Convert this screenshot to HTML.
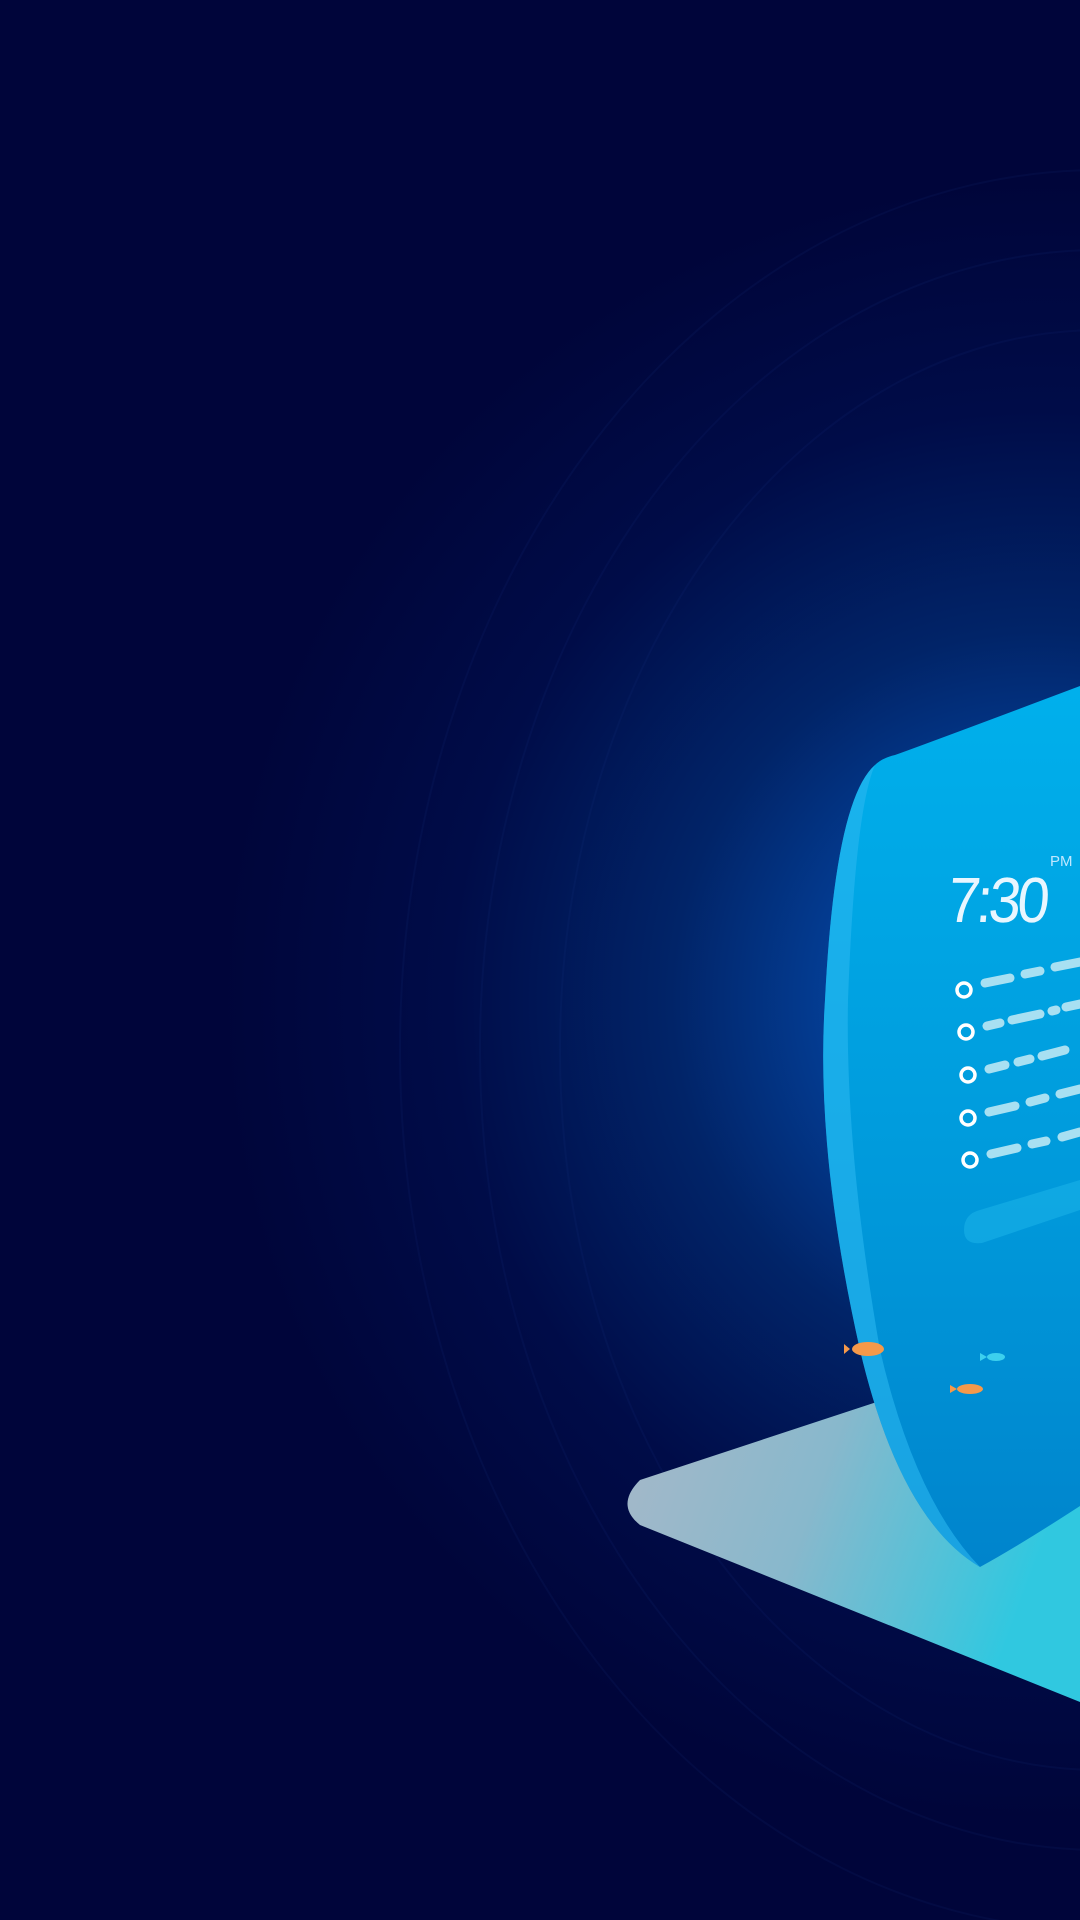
<!DOCTYPE html>
<html><head><meta charset="utf-8"><style>
html,body{margin:0;padding:0;width:1080px;height:1920px;overflow:hidden;background:#00053a;}
svg{display:block}
</style></head><body>
<svg width="1080" height="1920" viewBox="0 0 1080 1920" xmlns="http://www.w3.org/2000/svg">
<defs>
<radialGradient id="bg" cx="1040" cy="1000" r="820" gradientUnits="userSpaceOnUse">
<stop offset="0" stop-color="#0a5fc4"/>
<stop offset="0.22" stop-color="#04429c"/>
<stop offset="0.45" stop-color="#012468"/>
<stop offset="0.72" stop-color="#000c48"/>
<stop offset="1" stop-color="#00053a"/>
</radialGradient>
<linearGradient id="scr" x1="0" y1="0" x2="0" y2="1">
<stop offset="0" stop-color="#00b0ec"/>
<stop offset="0.6" stop-color="#0098da"/>
<stop offset="1" stop-color="#0084cc"/>
</linearGradient>
<linearGradient id="base" x1="0" y1="0" x2="1" y2="0.3">
<stop offset="0" stop-color="#a9b8c8"/>
<stop offset="0.5" stop-color="#88b8cc"/>
<stop offset="1" stop-color="#30c8e0"/>
</linearGradient>
</defs>
<rect width="1080" height="1920" fill="url(#bg)"/>
<g fill="none" stroke="#1a3a8a" stroke-opacity="0.12" stroke-width="2">
<ellipse cx="1100" cy="1050" rx="700" ry="880"/>
<ellipse cx="1100" cy="1050" rx="620" ry="800"/>
<ellipse cx="1100" cy="1050" rx="540" ry="720"/>
</g>
<!-- base -->
<path d="M640 1480 L1080 1335 L1080 1702 L640 1525 Q615 1505 640 1480 Z" fill="url(#base)"/>
<!-- screen -->
<path d="M895 755 Q950 735 1080 686 L1080 1506 Q1020 1545 980 1567 Q900 1520 860 1350 Q815 1150 825 1000 Q835 800 875 765 Q882 758 895 755 Z" fill="url(#scr)"/>
<path d="M875 765 Q835 800 825 1000 Q815 1150 860 1350 Q900 1520 980 1567 Q915 1500 880 1350 Q845 1150 848 1000 Q855 810 875 765 Z" fill="#29b8f0" opacity="0.6"/>
<text x="945" y="922" font-family="Liberation Sans, sans-serif" font-size="64" fill="#e8f6ff" transform="skewX(-5) translate(82,0)" letter-spacing="-4" textLength="98" lengthAdjust="spacingAndGlyphs">7:30</text>
<text x="1050" y="866" font-family="Liberation Sans, sans-serif" font-size="15" fill="#bfe8ff">PM</text>
<g fill="none" stroke="#ffffff" stroke-width="3.5">
<circle cx="964" cy="990" r="7"/><circle cx="966" cy="1032" r="7"/><circle cx="968" cy="1075" r="7"/><circle cx="968" cy="1118" r="7"/><circle cx="970" cy="1160" r="7"/>
</g>
<g stroke="#a8e0f2" stroke-width="9" stroke-linecap="round">
<line x1="985" y1="983" x2="1010" y2="978"/><line x1="1025" y1="974" x2="1040" y2="971"/><line x1="1055" y1="967" x2="1080" y2="962"/>
<line x1="987" y1="1026" x2="1000" y2="1023"/><line x1="1012" y1="1020" x2="1040" y2="1014"/><line x1="1052" y1="1011" x2="1056" y2="1010"/><line x1="1066" y1="1007" x2="1080" y2="1004"/>
<line x1="989" y1="1069" x2="1005" y2="1065"/><line x1="1018" y1="1062" x2="1030" y2="1059"/><line x1="1042" y1="1056" x2="1065" y2="1050"/>
<line x1="989" y1="1112" x2="1015" y2="1106"/><line x1="1030" y1="1102" x2="1045" y2="1098"/><line x1="1060" y1="1094" x2="1080" y2="1089"/>
<line x1="991" y1="1154" x2="1017" y2="1148"/><line x1="1032" y1="1144" x2="1046" y2="1141"/><line x1="1062" y1="1137" x2="1080" y2="1132"/>
</g>
<path d="M980 1210 L1080 1180 L1080 1210 L982 1243 Q964 1245 964 1230 Q964 1214 980 1210 Z" fill="#1cb4ea" opacity="0.55"/>
<ellipse cx="868" cy="1349" rx="16" ry="7" fill="#f5994a"/>
<path d="M850 1349 l-6 -5 v10 z" fill="#f5994a"/>
<ellipse cx="996" cy="1357" rx="9" ry="4" fill="#3cd0ee"/>
<path d="M987 1357 l-7 -4 v8 z" fill="#3cd0ee"/>
<ellipse cx="970" cy="1389" rx="13" ry="5" fill="#f5994a"/>
<path d="M957 1389 l-7 -4 v8 z" fill="#f5994a"/>
</svg>
</body></html>
